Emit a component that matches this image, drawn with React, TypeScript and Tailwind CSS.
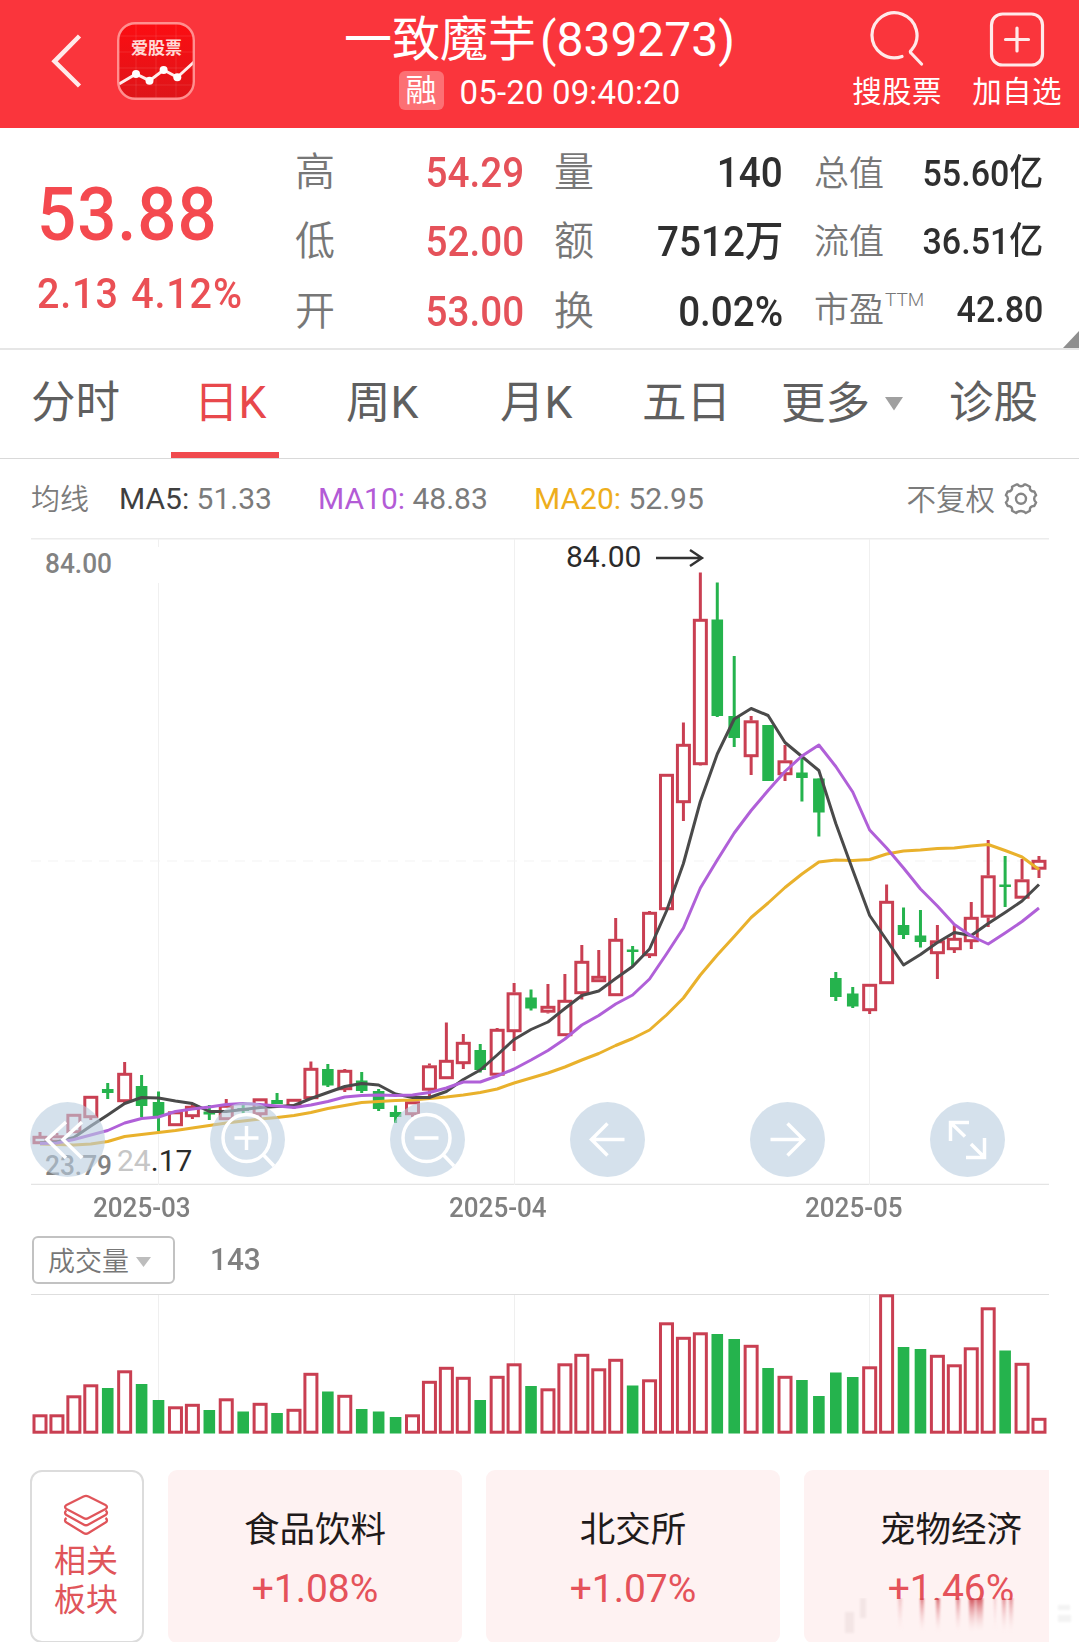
type Candle = [up: number, high: number, top: number, bottom: number, low: number];

// [up, high, body top, body bottom, low]
const candles: Candle[] = [
    [1, 1132, 1136, 1144, 1144], [1, 1133, 1135.5, 1142.5, 1142.5], [1, 1114, 1114, 1133, 1133], [1, 1096, 1096, 1118, 1120],
    [0, 1083, 1089, 1093, 1099], [1, 1062, 1073, 1102, 1103], [0, 1075, 1086, 1106, 1117], [0, 1091.5, 1102, 1116, 1131],
    [1, 1111.5, 1111.5, 1126, 1126], [1, 1104, 1106, 1117, 1119], [0, 1105, 1111.5, 1114.5, 1120], [1, 1099, 1105, 1120, 1120],
    [0, 1103, 1108, 1111, 1115], [1, 1098.5, 1098.5, 1115, 1118], [0, 1093, 1100, 1104, 1104], [1, 1099, 1099, 1107, 1109],
    [1, 1061.5, 1068, 1099, 1099], [0, 1064, 1069, 1085.5, 1087], [1, 1069, 1070, 1090, 1092], [0, 1072, 1080.5, 1091, 1093],
    [0, 1089, 1091, 1109, 1111], [0, 1105.5, 1112, 1117, 1123], [1, 1101.5, 1101.5, 1115, 1117], [1, 1063.5, 1065.5, 1090.5, 1096],
    [1, 1022.5, 1060, 1079, 1079], [1, 1034, 1042, 1064, 1069], [0, 1044, 1050, 1070, 1072.5], [1, 1028, 1029, 1075.5, 1075.5],
    [1, 983, 992.5, 1032, 1051], [0, 989.5, 997.5, 1008.5, 1010.5], [1, 984, 1006, 1012.5, 1013.5], [1, 974, 1000, 1036, 1036],
    [1, 945, 961, 994, 999.5], [1, 950, 976, 982, 982], [1, 918, 939, 996, 996], [0, 946, 949.5, 952, 966.5],
    [1, 911, 912, 956, 958], [1, 774, 774, 910, 910], [1, 722.5, 744, 803, 821], [1, 572.5, 619, 765, 765.5],
    [0, 582.5, 619.5, 716, 717], [0, 656, 716, 738, 747], [1, 716, 720.5, 757, 775], [0, 725, 725, 781, 781],
    [1, 745, 760.5, 775, 781], [0, 756.5, 772.5, 778, 801.5], [0, 778.5, 778.5, 812.5, 836.5], [0, 972, 978, 997, 1001],
    [0, 987, 993.5, 1006.5, 1008], [1, 984, 984, 1011, 1014], [1, 884.5, 901, 984, 984], [0, 907.5, 925, 935, 939],
    [0, 910, 935.5, 942, 947.5], [1, 925, 940.5, 954, 979], [1, 924, 938, 950, 953], [1, 902, 917, 942, 949],
    [1, 840, 875.5, 917.5, 927], [0, 856, 884.5, 887, 907], [1, 859, 879.5, 898.5, 898.5], [1, 856, 860, 869.5, 878],
];

const ma5 = [
    1143, 1142, 1137.5, 1126, 1115, 1103.5, 1097.5, 1098, 1101, 1103.5, 1111.5, 1111.5, 1109.5, 1107.5, 1106.5, 1105.5, 1098.5, 1092.5, 1086.5, 1083.5,
    1085, 1094, 1097.5, 1097.5, 1091.5, 1079.5, 1070, 1055, 1039.5, 1029.5, 1022, 1008.5, 995.5, 991, 978.5, 966.5, 949, 911, 863.5, 801.5,
    754, 719, 708.5, 715.5, 742.5, 756.5, 770.5, 823.5, 870, 915.5, 940, 965, 954.5, 942.5, 932.5, 935.5, 923.5, 912.5, 901, 884.5,
];
const ma10 = [
    1143.5, 1143, 1139.5, 1135, 1130.5, 1123, 1118.5, 1117, 1111.5, 1109, 1107, 1104.5, 1103.5, 1104.5, 1106, 1107.5, 1105, 1101.5, 1097, 1095.5,
    1095, 1095.5, 1095, 1092.5, 1088, 1082, 1082, 1076, 1069, 1060, 1050.5, 1039, 1025, 1015.5, 1004, 995, 979, 954, 928, 888,
    860, 833, 810.5, 790.5, 771.5, 756, 745, 766.5, 792, 830, 848, 868, 889, 906, 924.5, 936, 944, 933, 921.5, 908,
];
const ma20 = [
    1144, 1144.5, 1145, 1144, 1141.5, 1136.5, 1134.5, 1132.5, 1130.5, 1128, 1125.5, 1123, 1121, 1119, 1117.5, 1115.5, 1112.5, 1108.5, 1105.5, 1102.5,
    1101.5, 1100.5, 1100, 1098.5, 1097, 1095, 1092.5, 1089, 1083, 1078, 1073, 1067, 1060, 1053.5, 1045.5, 1038.5, 1030, 1015, 998, 975,
    955, 936.5, 917.5, 903, 887.5, 874, 862, 860, 860.5, 859.5, 854, 851, 850, 848.5, 848, 846, 844.5, 850.5, 857, 869.5,
];
const volumes = [
    19, 19, 38, 49, 45.5, 63, 49.5, 33.5, 27, 29.5, 23.5, 35, 22, 30.5, 20.5, 24.5, 60.5, 42, 38.5, 24.5,
    22, 16.5, 19, 52.5, 66.5, 56.5, 33.5, 57.5, 70, 47.5, 45, 70, 79.5, 65, 74.5, 48, 54, 111, 96.5, 101,
    99.5, 94.5, 88.5, 65.5, 57.5, 53.5, 37.5, 61, 56.5, 67, 139, 86.5, 84.5, 78.5, 69, 86, 126, 83, 70.5, 15.5,
];

const RED = '#c93f52';
const GREEN = '#25b34d';
const GRID = [158.5, 514.5, 869.5];
const cx = (i: number) => 40 + i * 16.932;
const toPoints = (ys: number[]) => ys.map((y, i) => `${cx(i)},${y}`).join(' ');

const Header = () => {
    return (
        <header className="flex h-32 bg-[#fa353c] text-white">
            <div className="flex w-[300px] shrink-0 items-start pl-[50px] pt-[22px]">
                <svg width="34" height="56" viewBox="50 33 34 56" className="mt-[11px]" fill="none" stroke="#ffeaea" strokeWidth="4.500">
                    <path d="M79.500 36 54.500 61.300 79.500 86" />
                </svg>
                <svg width="78" height="80" viewBox="117 22 78 80" className="ml-[33px]">
                    <defs>
                        <linearGradient id="logo" x1="0" y1="0" x2="0" y2="1">
                            <stop offset="0" stopColor="#fc0d12" />
                            <stop offset="1" stopColor="#de1519" />
                        </linearGradient>
                    </defs>
                    <rect x="118.200" y="23.200" width="75.600" height="75.600" rx="17" fill="url(#logo)" />
                    <path d="M136 24v74M156 24v74M176 24v74M119 36h74M119 52h74M119 68h74M119 85h74" stroke="#fff" strokeOpacity=".1" fill="none" />
                    <text x="156.500" y="54" textAnchor="middle" fontSize="17" fontWeight="700" fill="#ffd9d6" fontFamily="Noto Sans CJK SC, sans-serif">爱股票</text>
                    <path d="M119 84 136 74l13.500 6.700L163.600 70l13.700 7.300L194 62" fill="none" stroke="#ffeceb" strokeWidth="3" />
                    <g fill="#fff">
                        <circle cx="136" cy="74" r="4" />
                        <circle cx="149.500" cy="80.700" r="4" />
                        <circle cx="163.600" cy="70" r="4" />
                        <circle cx="177.300" cy="77.300" r="4" />
                    </g>
                    <rect x="118.200" y="23.200" width="75.600" height="75.600" rx="17" fill="none" stroke="#ff8f8f" strokeWidth="2.400" />
                </svg>
            </div>
            <div className="flex w-[479px] shrink-0 flex-col items-center">
                <h1 className="mt-[10px] h-[60px] whitespace-nowrap text-[48px] leading-[60px]">一致魔芋<span className="ml-[4px]">(839273)</span></h1>
                <div className="mt-px flex h-[39px] items-center gap-[16px]">
                    <span className="flex h-[39px] w-[45px] items-center justify-center rounded-[6px] bg-[#fc7074] text-[31px] leading-[41px]">融</span>
                    <span className="mt-[4px] text-[33px] leading-[44px] tracking-[0.150px]">05-20 09:40:20</span>
                </div>
            </div>
            <div className="flex flex-1 pl-[73px] pt-[10px]">
                <div className="flex w-[90px] flex-col items-center">
                    <svg width="58" height="58" viewBox="0 0 58 58" className="-ml-[5px]" fill="none" stroke="#ffe9e9" strokeWidth="3.200" strokeLinecap="round">
                        <path d="M36 46.500A22.500 22.500 0 1 1 45.500 40q-2 1.500-.500 3L55.500 54" />
                    </svg>
                    <span className="mt-px text-[29.500px] leading-[46px] tracking-[0.300px] whitespace-nowrap">搜股票</span>
                </div>
                <div className="ml-[30px] flex w-[90px] flex-col items-center">
                    <svg width="58" height="58" viewBox="0 0 58 58" className="-ml-px" fill="none" stroke="#ffe9e9" strokeWidth="3.200" strokeLinecap="round">
                        <rect x="3.500" y="4" width="51" height="51" rx="11" />
                        <path d="M29 18v23M17.500 29.500h23" />
                    </svg>
                    <span className="mt-px text-[29.500px] leading-[46px] tracking-[0.300px] whitespace-nowrap">加自选</span>
                </div>
            </div>
        </header>
    );
};

const quoteA = [['高', '54.29'], ['低', '52.00'], ['开', '53.00']];
const quoteB = [['量', '140', ''], ['额', '7512', '万'], ['换', '0.02%', '']];
const quoteC = [['总值', '55.60', '亿'], ['流值', '36.51', '亿'], ['市盈', '42.80', '']];

const Quote = () => {
    return (
        <section className="relative flex h-[222px] border-b-2 border-[#e6e6e6] bg-white">
            <div className="w-[295px] shrink-0 whitespace-nowrap pl-[37px] font-medium text-[#f4494f]">
                <div className="mt-[46px] h-[80px] origin-left scale-x-[0.92] text-[75px] leading-[80px] tracking-[1px]">53.88</div>
                <div className="mt-[15px] h-[50px] origin-left scale-x-[0.94] text-[42px] leading-[50px] tracking-[0.900px] text-[#ea5055]">2.13 <span className="ml-[2px]">4.12%</span></div>
            </div>
            <div className="w-[229px] shrink-0 pt-[10px]">
                {quoteA.map(([label, value]) => (
                    <div key={label} className="flex h-[69.500px] items-center justify-between">
                        <span className="text-[40px] font-[350] text-[#777]">{label}</span>
                        <span className="origin-right scale-x-[0.92] text-[42px] font-medium leading-[68px] text-[#e5525a]">{value}</span>
                    </div>
                ))}
            </div>
            <div className="ml-[30px] w-[229px] shrink-0 pt-[10px]">
                {quoteB.map(([label, value, unit]) => (
                    <div key={label} className="flex h-[69.500px] items-center justify-between whitespace-nowrap">
                        <span className="text-[40px] font-[350] text-[#777]">{label}</span>
                        <span className="origin-right scale-x-[0.92] text-[42px] font-medium leading-[68px] text-[#2f2f2f]">{value}{unit}</span>
                    </div>
                ))}
            </div>
            <div className="ml-[31px] w-[229px] shrink-0 pt-[12px]">
                {quoteC.map(([label, value, unit]) => (
                    <div key={label} className="flex h-[68px] items-center justify-between whitespace-nowrap">
                        <span className="mt-[2px] flex text-[35px] font-[350] text-[#777]">
                            {label}
                            {label === '市盈' && <span className="-mt-[5px] ml-px h-0 text-[19px] leading-[40px]">TTM</span>}
                        </span>
                        <span className="origin-right scale-x-[0.92] text-[37px] font-medium leading-[68px] text-[#2f2f2f]">{value}{unit}</span>
                    </div>
                ))}
            </div>
            <svg width="16" height="17" viewBox="0 0 16 17" className="absolute bottom-0 right-0">
                <path d="M16 0v17H0z" fill="#8f8f8f" />
            </svg>
        </section>
    );
};

const Tabs = () => {
    return (
        <nav className="grid h-[109px] grid-cols-[163px_152px_154px_142px_139px_168px_1fr] whitespace-nowrap border-b border-[#d9d9d9] bg-white pl-[31px] text-[44.500px] leading-[107px] text-[#5f5f5f]">
            <span>分时</span>
            <span className="relative text-[#e8484c]">
                日K
                <i className="absolute -left-[23px] bottom-0 h-[6px] w-[108px] bg-[#f04a4e]" />
            </span>
            <span>周K</span>
            <span>月K</span>
            <span>五日</span>
            <span className="flex items-center">
                更多
                <svg width="18" height="14" viewBox="0 0 18 14" className="ml-[15px]">
                    <path d="M0 0h18L9 13.500z" fill="#a0a0a0" />
                </svg>
            </span>
            <span>诊股</span>
        </nav>
    );
};

const Averages = () => {
    return (
        <div className="flex h-[79px] items-center whitespace-nowrap bg-white pl-[31px] pr-[41px] text-[30px] leading-[80px] text-[#7b7b7b]">
            <span className="mt-[2px] w-[88px] text-[29px] font-[350]">均线</span>
            <span className="w-[199px]"><span className="text-[#3f3f3f]">MA5:</span> 51.33</span>
            <span className="w-[216px]"><span className="text-[#b35bd6]">MA10:</span> 48.83</span>
            <span><span className="text-[#eeae1c]">MA20:</span> 52.95</span>
            <span className="ml-auto mt-[2px] text-[29.500px] font-[350]">不复权</span>
            <svg width="34" height="34" viewBox="0 0 34 34" className="ml-[9px]" fill="none" stroke="#858585" strokeWidth="2.400" strokeLinejoin="round">
                <path d="M12.500 2.500h1.200c1.500 2.300 5.100 2.300 6.600 0h1.400l4.300 2.300c-.7 2.900 1.300 5 4.300 4.700l1.800 3.700c-2.600 1.700-2.600 5.500 0 7.300l-1.800 3.500c-3-.4-5 1.800-4.300 4.700l-4.200 2.300c-2-2.700-7.600-2.700-9.600 0L8 28.700c.7-2.900-1.300-5.100-4.300-4.700l-1.800-3.500c2.600-1.800 2.600-5.600 0-7.300L3.700 9.500C6.700 9.800 8.700 7.700 8 4.800z" />
                <circle cx="17" cy="16.800" r="5" />
            </svg>
        </div>
    );
};

const controls = [
    <path key="fast" d="M36 20 17 37.500 36 56M52 20 33 37.500 52 56" />,
    <g key="in"><circle cx="36.500" cy="36" r="23.500" /><path d="M24.500 36h24M36.500 24v24M53.500 53 64 64" /></g>,
    <g key="out"><circle cx="36.500" cy="36" r="23.500" /><path d="M24.500 36h24M53.500 53 64 64" /></g>,
    <path key="left" d="M54.500 37.500h-33M37.500 21.500l-16 16 16 16" />,
    <path key="right" d="M20.500 37.500h33M37.500 21.500l16 16-16 16" />,
    <path key="full" d="M39 20.500H20.500V39M20.500 20.500l14.500 14M36 55.500h18.500V36M54.500 55.500 41 42" />,
];

const KLine = () => {
    return (
        <section className="relative bg-white">
            <svg width="1079" height="647" viewBox="0 538 1079 647" fill="none" className="block">
                <path d="M31 538.500h1018" stroke="#ececec" strokeWidth="2" />
                <path d="M31 1184.500h1018" stroke="#e4e4e4" strokeWidth="1.300" />
                <path d="M158.500 539v8M158.500 583v602M514.500 539v646M869.500 539v646" stroke="#f0f0f0" />
                <path d="M31 861h1018" stroke="#f3f3f3" strokeWidth="1.200" strokeDasharray="10 7" />
                <text x="45" y="572.500" fontSize="28" fontWeight="500" fill="#828282" textLength="67" lengthAdjust="spacingAndGlyphs">84.00</text>
                <text x="45" y="1174.500" fontSize="28" fontWeight="500" fill="#828282" textLength="67" lengthAdjust="spacingAndGlyphs">23.79</text>
                <text x="566" y="567" fontSize="30" fill="#2b2b2b">84.00</text>
                <text x="117" y="1171" fontSize="30" fill="#2b2b2b"><tspan fill="#c6c6c6">24</tspan>.17</text>
                <path d="M656 558h45M690 550l12 8-12 8" stroke="#333" strokeWidth="2.400" />
                {candles.map(([up, high, top, bottom, low], i) => up ? (
                    <g key={i} stroke={RED} strokeWidth="3">
                        <path d={`M${cx(i)} ${high}V${top}M${cx(i)} ${bottom}V${low}`} />
                        <rect x={cx(i) - 6} y={top + 1.3} width="12" height={Math.max(bottom - top - 2.6, 1)} />
                    </g>
                ) : (
                    <g key={i} fill={GREEN}>
                        <rect x={cx(i) - 1.5} y={high} width="3" height={low - high} />
                        <rect x={cx(i) - 5.8} y={top} width="11.600" height={bottom - top} />
                    </g>
                ))}
                <polyline points={toPoints(ma20)} stroke="#e9b12c" strokeWidth="3" strokeLinejoin="round" />
                <polyline points={toPoints(ma5)} stroke="#4a4a4a" strokeWidth="3" strokeLinejoin="round" />
                <polyline points={toPoints(ma10)} stroke="#b060d8" strokeWidth="3" strokeLinejoin="round" />
            </svg>
            <div className="absolute bottom-[8px] left-[30px] flex gap-[105px]">
                {controls.map((icon, i) => (
                    <svg key={i} width="75" height="75" viewBox="0 0 75 75" fill="none" stroke="#fff" strokeWidth="3.500">
                        <circle cx="37.500" cy="37.500" r="37.500" fill="#b9cddf" fillOpacity=".6" stroke="none" />
                        {icon}
                    </svg>
                ))}
            </div>
        </section>
    );
};

const Dates = () => {
    return (
        <div className="flex h-[51px] gap-[259px] bg-white pl-[93px] text-[28px] font-medium leading-[45px] text-[#808080]">
            {['2025-03', '2025-04', '2025-05'].map((date) => (
                <span key={date} className="w-[97px] origin-left scale-x-[0.93] whitespace-nowrap">{date}</span>
            ))}
        </div>
    );
};

const Volume = () => {
    return (
        <section className="bg-white">
            <div className="flex h-[58px] items-start pl-[32px]">
                <div className="flex h-[48px] w-[143px] items-center rounded-[6px] border-2 border-[#c2c2c2] pl-[14px] text-[27px] font-[350] leading-[48px] text-[#777]">
                    <span className="mt-[3px]">成交量</span>
                    <svg width="15" height="10" viewBox="0 0 15 10" className="ml-[7px] mt-[3px]">
                        <path d="M0 0h15L7.500 10z" fill="#bdbdbd" />
                    </svg>
                </div>
                <span className="ml-[35px] origin-left scale-x-[0.96] text-[31px] font-medium leading-[47px] text-[#808080]">143</span>
            </div>
            <svg width="1079" height="142" viewBox="0 1294 1079 142" fill="none" className="block">
                <path d="M31 1294.500h1018" stroke="#dedede" />
                {GRID.map((x) => <path key={x} d={`M${x} 1295v138`} stroke="#efefef" />)}
                {volumes.map((h, i) => candles[i][0] ? (
                    <rect key={i} x={cx(i) - 6} y={1433.5 - h + 1.3} width="12" height={h - 2.6} fill="#fff" stroke={RED} strokeWidth="3" />
                ) : (
                    <rect key={i} x={cx(i) - 5.8} y={1433.5 - h} width="11.600" height={h} fill={GREEN} />
                ))}
            </svg>
        </section>
    );
};

const sectors = [['食品饮料', '+1.08%'], ['北交所', '+1.07%'], ['宠物经济', '+1.46%']];
const streaks = [[898, 4, 0.25], [920, 4, 0.6], [936, 4, 0.7], [956, 4, 0.55], [969, 6, 0.85], [976, 7, 0.8], [994, 2, 0.25], [1002, 4, 0.5], [1009, 4, 0.5]];

const Sectors = () => {
    return (
        <section className="relative flex h-[172px] gap-6 overflow-hidden pl-[30px] pr-[30px]">
            <div className="flex h-[173px] w-[114px] shrink-0 flex-col items-center rounded-[12px] border-2 border-[#dcdcdc] pr-[2px] pt-[22px] text-[32px] leading-[39px] text-[#e0555a]">
                <svg width="46" height="42" viewBox="0 0 46 42" fill="none" stroke="#e0555a" strokeWidth="2.300" strokeLinejoin="round">
                    <path d="M20.500 2.500q2.500-1.200 5 0L42.500 11q3 2 0 4L25.500 24q-2.500 1.500-5 0L3.500 15q-3-2 0-4z" />
                    <path d="M3.500 16.500q-3 2 0 4.500l17 9.500q2.500 1.500 5 0L42.500 21q3-2.500 0-4.500M3.500 24q-3 2.500 0 4.500l17 10.500q2.500 1.500 5 0L42.500 28.500q3-2 0-4.500" />
                </svg>
                <span className="mt-[6px]">相关</span>
                <span>板块</span>
            </div>
            <div className="flex flex-1 gap-6 overflow-hidden">
                {sectors.map(([name, change]) => (
                    <div key={name} className="flex h-[173px] w-[294px] shrink-0 flex-col items-center rounded-[9px] bg-[#fef2f2] pt-[34px]">
                        <span className="text-[35.500px] leading-[52px] text-[#1f1a1a]">{name}</span>
                        <span className="mt-[7px] text-[39px] leading-[52px] text-[#e5525a]">{change}</span>
                    </div>
                ))}
            </div>
            <svg width="245" height="44" viewBox="834 1598 245 44" className="absolute bottom-0 right-0">
                <defs>
                    <linearGradient id="fade" x1="0" y1="0" x2="0" y2="1">
                        <stop offset="0" stopColor="#c9353f" />
                        <stop offset="1" stopColor="#f6d5d6" stopOpacity="0" />
                    </linearGradient>
                    <filter id="soft"><feGaussianBlur stdDeviation="1" /></filter>
                </defs>
                <path d="M834 1600h215v14H834z" fill="#fef2f2" />
                <g filter="url(#soft)">
                    {streaks.map(([x, w, o]) => <rect key={x} x={x} y="1598" width={w} height="34" fill="url(#fade)" opacity={o} />)}
                    <path d="M845 1612h9v21h-9zM860 1598h6v20h-6z" fill="#eedfe0" opacity=".7" />
                    <path d="M1058 1605h12v5h-12zM1058 1615h13v7h-13z" fill="#f3f3f3" />
                </g>
            </svg>
        </section>
    );
};

export default function App() {
    return (
        <div className="h-[1642px] w-[1079px] overflow-hidden bg-white font-['Roboto','Noto_Sans_CJK_SC',sans-serif]">
            <Header />
            <Quote />
            <Tabs />
            <Averages />
            <KLine />
            <Dates />
            <Volume />
            <div className="h-[34px]" />
            <Sectors />
        </div>
    );
}
